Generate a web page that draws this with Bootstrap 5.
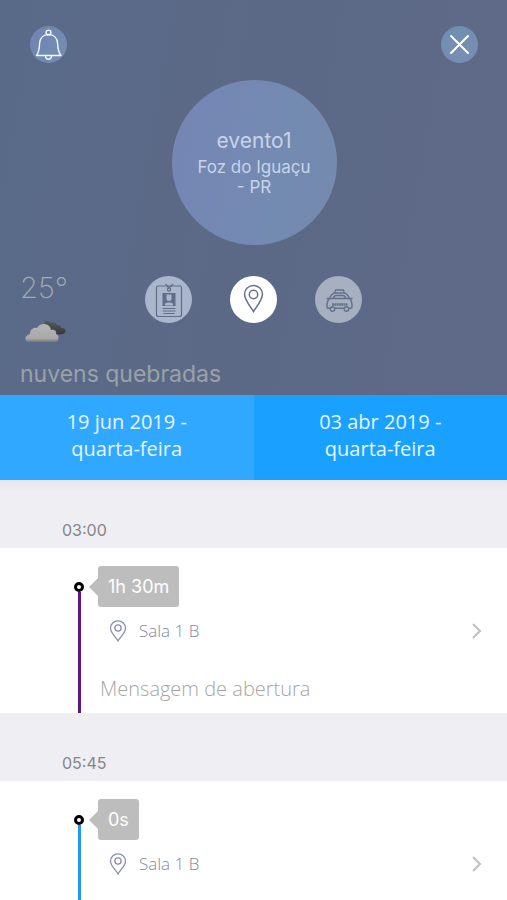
<!DOCTYPE html>
<html lang="pt-BR">
<head>
<meta charset="utf-8">
<meta name="viewport" content="width=device-width, initial-scale=1">
<title>evento1</title>
<link href="https://cdn.jsdelivr.net/npm/bootstrap@5.3.0/dist/css/bootstrap.min.css" rel="stylesheet">
<style>
body { font-family: Inter, "Liberation Sans", sans-serif; background: #fff; }
button { border: 0; padding: 0; }
.hero {
  background: linear-gradient(100deg, #596a89, #5c6986 50%, #5e6a87);
  padding: 26px 29px 6px 20px;
}
.round-btn { width: 37px; height: 37px; }
.bell-btn { background: linear-gradient(120deg, #7480b5, #708caf 60%, #7a8bb0); margin-left: 10px; }
.close-btn { background: linear-gradient(160deg, #6d8fb0, #7a8eb4); }
.disc {
  width: 165px; height: 165px; margin: 17px auto 31px; color: #c8d3e8;
  background: linear-gradient(100deg, #7586b3 10%, #738ab2 60%, #768aae);
  position: relative; left: 5px;
}
.disc-title { font-size: 21px; line-height: 30px; padding-bottom: 1px; }
.disc-place { font-size: 17px; line-height: 20px; width: 120px; padding-bottom: 2px; }
.weather { display: grid; grid-template-columns: 1fr auto 1fr; margin-right: -9px; }
.shortcuts { gap: 38px; }
.shortcut { width: 47px; height: 47px; background: #a9b6cb; }
.shortcut.taxi { background: #a6b0c0; }
.shortcut.current { background: #fff; }
.temp { font-size: 29px; line-height: 24px; font-weight: 200; color: #a4abb4; margin-bottom: 20px; }
.sky { color: #9ba2a7; font-size: 23px; line-height: 30px; margin-top: 15px; }
.day {
  font-family: "Open Sans", "Noto Sans", sans-serif; font-size: 20px; line-height: 27px;
  color: #e4f5ff; background: #1aa1ff; padding: 13px 60px 18px;
}
.day.current { background: #31a8ff; }
.hour {
  background: #efeef3; color: #85858a; font-size: 16px; line-height: 20px;
  padding: 40px 62px 8px; margin: 0; font-weight: 400;
}
.hour.first { background: linear-gradient(#e7e5ec, #efeef3 12px); }
.talk { background: #fff; padding: 18px 24px 0 74px; color: inherit; }
.rail { width: 10px; padding-top: 16px; }
.dot { width: 10px; height: 10px; border: 3px solid #000; background: #fff; }
.stem { width: 3px; background: #5d1680; }
.stem.blue { background: #2196f3; }
.chip {
  background: #bdbdbd; color: #fff; font-size: 18px; line-height: 24px;
  padding: 9px 10px 8px; border-radius: 3px; margin-left: 14px; position: relative;
}
.chip::before {
  content: ""; position: absolute; left: -9px; top: 11px;
  border: solid transparent; border-width: 10px 10px 10px 0; border-right-color: #bdbdbd;
}
.place, .topic { font-family: "Open Sans", "Noto Sans", sans-serif; font-weight: 300; }
.place { font-size: 17px; line-height: 24px; color: #7f899f; padding-left: 25px; margin-top: 12px; gap: 12px; }
.topic { font-size: 20px; line-height: 26px; color: #a6a6a6; margin: 33px 0 11px 16px; }
</style>
</head>
<body class="d-flex flex-column min-vh-100">
<header class="hero">
  <div class="d-flex justify-content-between">
    <button type="button" class="round-btn bell-btn rounded-circle d-flex align-items-center justify-content-center" aria-label="Notificações">
      <svg width="37" height="37" viewBox="0 0 37 37" fill="none" stroke="#f1f8ff" stroke-width="1.4" stroke-linejoin="round"><circle cx="18.500" cy="6.500" r="2.400"/><path d="M6.500 29.500h24.500c-3-3.500-3.200-7-3.400-12-.3-5.500-3.800-9-9-9s-8.700 3.500-9 9c-.2 5-.4 8.500-3.100 12zM15.500 29.500c0 5 6 5 6 0"/></svg>
    </button>
    <button type="button" class="round-btn close-btn rounded-circle d-flex align-items-center justify-content-center" aria-label="Fechar">
      <svg width="37" height="37" viewBox="0 0 37 37" stroke="#fff" stroke-width="2" stroke-linecap="round"><path d="M10 10l17 17M27 10l-17 17"/></svg>
    </button>
  </div>
  <div class="disc rounded-circle d-flex flex-column align-items-center justify-content-center text-center">
    <div class="disc-title">evento1</div>
    <div class="disc-place">Foz do Iguaçu - PR</div>
  </div>
  <div class="weather">
    <div>
      <div class="temp">25°</div>
      <svg class="d-block" width="50" height="24" viewBox="0 0 50 24" aria-hidden="true">
        <defs>
          <linearGradient id="light" x1="0" y1="0" x2="0" y2="1"><stop offset="0" stop-color="#b4b5b6"/><stop offset=".8" stop-color="#a9a9a9"/><stop offset="1" stop-color="#777"/></linearGradient>
          <linearGradient id="dark" x1="0" y1="0" x2="0" y2="1"><stop offset="0" stop-color="#555b5b"/><stop offset="1" stop-color="#35383b"/></linearGradient>
        </defs>
        <path fill="url(#dark)" d="M24 4c0-4 5-4 7-1 3-1 5 0 6 2 3 0 4 1 4 3 5-1 6 5 2 6-4 1-9 0-12-3z"/>
        <path fill="url(#light)" d="M9 22c-5 0-5-7 1-8 0-5 4-7 7-6 3-6 13-5 14 2 4-1 6 2 5 4 4 1 3 8-1 8z"/>
      </svg>
    </div>
    <nav class="shortcuts d-flex" aria-label="Atalhos">
      <button type="button" class="shortcut rounded-circle" aria-label="Credencial">
        <svg class="d-block" width="47" height="47" viewBox="0 0 47 47" fill="none" stroke="#606d89" stroke-width="1.200"><rect x="11.500" y="10" width="25" height="30.500" rx="2"/><path d="M20.500 8l3.500 4 4-4"/><circle cx="24" cy="13.500" r="1.600"/><path d="M17.500 32.500h13M17.500 35h13M18.500 37.500h11"/><path fill="#606d89" stroke="none" fill-rule="evenodd" d="M17.500 17h13v13h-13zM21.500 18.500v4.500c0 1 1 2 2.500 2s2.500-1 2.500-2v-4.500zM20 29.500h8V28c-1-2-7-2-8 0z"/></svg>
      </button>
      <button type="button" class="shortcut current rounded-circle" aria-label="Local" aria-current="true">
        <svg class="d-block" width="47" height="47" viewBox="0 0 47 47" fill="none" stroke="#65718f" stroke-width="1.500"><path d="M23.500 35.500c-3-5-9-11.500-9-17.500a9 8.500 0 0 1 18 0c0 6-6 12.500-9 17.500z"/><circle cx="23.500" cy="18.500" r="4.200"/></svg>
      </button>
      <button type="button" class="shortcut taxi rounded-circle" aria-label="Táxi">
        <svg class="d-block" width="47" height="47" viewBox="0 0 47 47" fill="none" stroke="#65718b" stroke-width="1.400" stroke-linejoin="round" stroke-linecap="round"><path d="M20 17l.5-3h8l.5 3M14.500 22.500c1.500-3.500 3-5.500 6-5.500h8c3 0 4.500 2 6 5.500M18 22.500c.8-2 1.500-3 3-3h7c1.500 0 2.200 1 3 3zM12 22.500h2.500h20h2.500M14.500 22.500c-1.600 1.500-2.500 3.500-2.500 6v2c0 1 .8 1.800 1.800 1.800h21.400c1 0 1.800-.8 1.800-1.800v-2c0-2.500-.9-4.500-2.500-6"/><circle cx="17.500" cy="33" r="2.200" fill="#a6b0c0"/><circle cx="31.500" cy="33" r="2.200" fill="#a6b0c0"/><path d="M17 28.500h15.500" stroke-width="2.400" stroke-linecap="butt" stroke-dasharray="1.900 .4"/></svg>
      </button>
    </nav>
  </div>
  <div class="sky">nuvens quebradas</div>
</header>

<div class="row g-0">
  <button type="button" class="day current col-6" aria-pressed="true">19 jun 2019 - quarta-feira</button>
  <button type="button" class="day col-6" aria-pressed="false">03 abr 2019 - quarta-feira</button>
</div>

<main class="d-flex flex-column flex-grow-1">
  <h2 class="hour first">03:00</h2>
  <a href="#" class="talk d-flex text-decoration-none">
    <div class="rail d-flex flex-column align-items-center">
      <span class="dot rounded-circle"></span><span class="stem flex-grow-1"></span>
    </div>
    <div class="flex-grow-1">
      <div class="d-flex"><span class="chip">1h 30m</span></div>
      <div class="place d-flex align-items-center">
        <svg width="18" height="22" viewBox="0 0 18 22" fill="none" stroke="#8590b4" stroke-width="1.300"><path d="M9 21C7 17 1.500 13 1.500 8.200a7.500 7.300 0 0 1 15 0C16.500 13 11 17 9 21z"/><circle cx="9" cy="8" r="3.100"/></svg>
        <span class="flex-grow-1">Sala 1 B</span>
        <svg width="12" height="16" viewBox="0 0 12 16" fill="none" stroke="#bfbfc1" stroke-width="2"><path d="M2 1l7 7-7 7"/></svg>
      </div>
      <div class="topic">Mensagem de abertura</div>
    </div>
  </a>
  <h2 class="hour">05:45</h2>
  <a href="#" class="talk d-flex flex-grow-1 text-decoration-none">
    <div class="rail d-flex flex-column align-items-center">
      <span class="dot rounded-circle"></span><span class="stem blue flex-grow-1"></span>
    </div>
    <div class="flex-grow-1">
      <div class="d-flex"><span class="chip">0s</span></div>
      <div class="place d-flex align-items-center">
        <svg width="18" height="22" viewBox="0 0 18 22" fill="none" stroke="#8590b4" stroke-width="1.300"><path d="M9 21C7 17 1.500 13 1.500 8.200a7.500 7.300 0 0 1 15 0C16.500 13 11 17 9 21z"/><circle cx="9" cy="8" r="3.100"/></svg>
        <span class="flex-grow-1">Sala 1 B</span>
        <svg width="12" height="16" viewBox="0 0 12 16" fill="none" stroke="#bfbfc1" stroke-width="2"><path d="M2 1l7 7-7 7"/></svg>
      </div>
    </div>
  </a>
</main>
<script src="https://cdn.jsdelivr.net/npm/bootstrap@5.3.0/dist/js/bootstrap.bundle.min.js"></script>
</body>
</html>
